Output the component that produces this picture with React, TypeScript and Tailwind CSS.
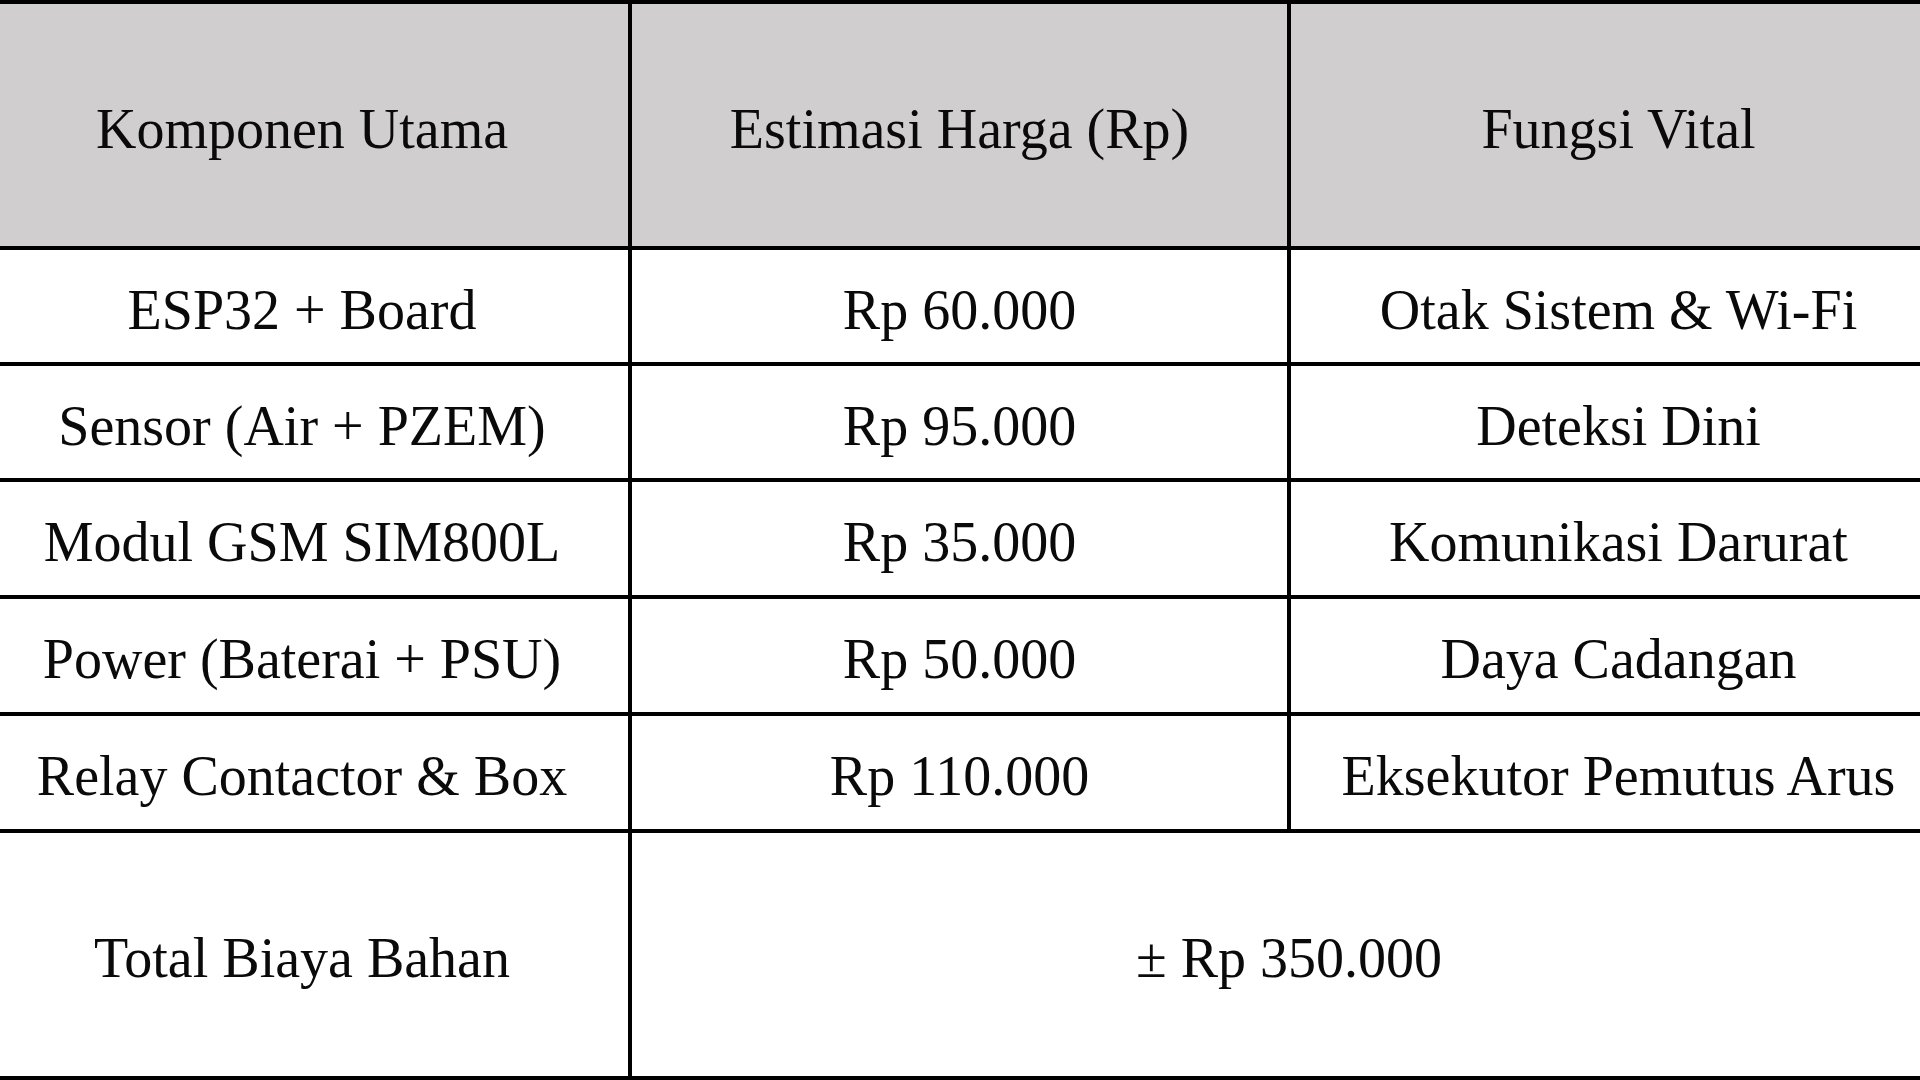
const rows = [
  { name: 'ESP32 + Board', price: 'Rp 60.000', role: 'Otak Sistem & Wi-Fi', h: 'h-[112px]' },
  { name: 'Sensor (Air + PZEM)', price: 'Rp 95.000', role: 'Deteksi Dini', h: 'h-[112px]' },
  { name: 'Modul GSM SIM800L', price: 'Rp 35.000', role: 'Komunikasi Darurat', h: 'h-[113px]' },
  { name: 'Power (Baterai + PSU)', price: 'Rp 50.000', role: 'Daya Cadangan', h: 'h-[113px]' },
  { name: 'Relay Contactor & Box', price: 'Rp 110.000', role: 'Eksekutor Pemutus Arus', h: 'h-[113px]' },
];

function Cell({ children, className = '' }: { children: React.ReactNode; className?: string }) {
  return (
    <div className={`flex items-center justify-center whitespace-nowrap pt-[7px] ${className}`}>
      {children}
    </div>
  );
}

export default function App() {
  return (
    <div className="w-screen h-screen overflow-hidden bg-white">
      <div
        className="ml-[-24px] w-[1970px] border-t-[4px] border-[#000] text-[56px] leading-none text-[#0a0a0a]"
        style={{ fontFamily: '"Liberation Serif", "Times New Roman", serif' }}
      >
        <div className="flex h-[242px] box-content border-b-[4px] border-[#000] bg-[#d0cecf]">
          <Cell className="w-[652px] box-content border-r-[4px] border-[#000]">Komponen Utama</Cell>
          <Cell className="w-[655px] box-content border-r-[4px] border-[#000]">Estimasi Harga (Rp)</Cell>
          <Cell className="flex-1">Fungsi Vital</Cell>
        </div>

        {rows.map((r) => (
          <div key={r.name} className={`flex ${r.h} box-content border-b-[4px] border-[#000]`}>
            <Cell className="w-[652px] box-content border-r-[4px] border-[#000]">{r.name}</Cell>
            <Cell className="w-[655px] box-content border-r-[4px] border-[#000]">{r.price}</Cell>
            <Cell className="flex-1">{r.role}</Cell>
          </div>
        ))}

        <div className="flex h-[243px] box-content border-b-[4px] border-[#000]">
          <Cell className="w-[652px] box-content border-r-[4px] border-[#000]">Total Biaya Bahan</Cell>
          <Cell className="flex-1">± Rp 350.000</Cell>
        </div>
      </div>
    </div>
  );
}
